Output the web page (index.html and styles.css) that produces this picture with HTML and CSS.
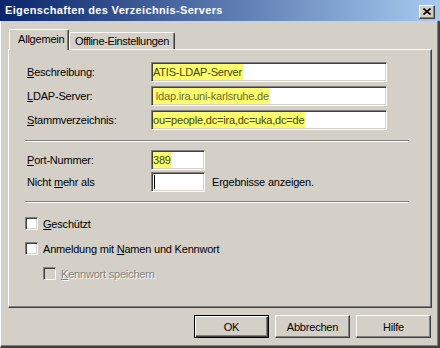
FILE: index.html
```html
<!DOCTYPE html>
<html lang="de">
<head>
    <meta charset="UTF-8">
    <title>Eigenschaften des Verzeichnis-Servers</title>
    <link rel="stylesheet" href="styles.css">
</head>
<body>
    <div class="window">
        <div class="titlebar">
            <span class="title">Eigenschaften des Verzeichnis-Servers</span>
            <span class="close">
                <svg width="8" height="7" viewBox="0 0 8 7"><path d="M0.5 0.5 L7.5 6.5 M7.5 0.5 L0.5 6.5" stroke="#000" stroke-width="1.6" fill="none"/></svg>
            </span>
        </div>

        <div class="frame">
            <div class="tabs">
                <div class="tab active">Allgemein</div>
                <div class="tab">Offline-Einstellungen</div>
            </div>

            <div class="panel">
                <div class="grid">
                    <label><u>B</u>eschreibung:</label>
                    <div class="field wide"><span class="hl">ATIS-LDAP-Server</span></div>
                    <label><u>L</u>DAP-Server:</label>
                    <div class="field wide"><span class="hl light">&nbsp;ldap.ira.uni-karlsruhe.de</span></div>
                    <label><u>S</u>tammverzeichnis:</label>
                    <div class="field wide"><span class="hl">ou=people,dc=ira,dc=uka,dc=de</span></div>
                </div>

                <div class="sep first"></div>

                <div class="grid tight">
                    <label><u>P</u>ort-Nummer:</label>
                    <div class="row"><div class="field short"><span class="hl">389</span></div></div>
                    <label>Nicht <u>m</u>ehr als</label>
                    <div class="row">
                        <div class="field short"><span class="caret"></span></div>
                        <span class="after">Ergebnisse anzeigen.</span>
                    </div>
                </div>

                <div class="sep"></div>

                <div class="checks">
                    <div class="check"><span class="box"></span><span><u>G</u>eschützt</span></div>
                    <div class="check"><span class="box"></span><span>Anmeldung mit <u>N</u>amen und Kennwort</span></div>
                    <div class="check sub disabled"><span class="box"></span><span><u>K</u>ennwort speichern</span></div>
                </div>
            </div>

            <div class="buttons">
                <button class="btn default">OK</button>
                <button class="btn">Abbrechen</button>
                <button class="btn">Hilfe</button>
            </div>
        </div>
    </div>
</body>
</html>
```

FILE: styles.css
```css
body {
    margin: 0;
    background-color: #d4d0c8;
    font-family: "Liberation Sans", Arial, sans-serif;
    font-size: 11px;
    letter-spacing: -0.2px;
    color: #000;
}
.window {
    width: 440px;
    height: 348px;
    display: flex;
    flex-direction: column;
    background-color: #d4d0c8;
}
.titlebar {
    height: 21px;
    flex: none;
    display: flex;
    justify-content: space-between;
    background: linear-gradient(to right, #0a246a, #a6caf0);
}
.title {
    padding-left: 5px;
    line-height: 21px;
    color: white;
    font-weight: bold;
    font-size: 11px;
    letter-spacing: 0.35px;
}
.close {
    width: 16px;
    height: 14px;
    margin: 5px 5px 0 0;
    box-sizing: border-box;
    background-color: #d4d0c8;
    border: 1px solid;
    border-color: #fff #404040 #404040 #fff;
    box-shadow: inset -1px -1px #808080;
    display: flex;
    align-items: center;
    justify-content: center;
}
.close svg {
    display: block;
    margin: 0 1px 1px 0;
}
.frame {
    flex: 1;
    padding: 8px 6px 0 7px;
    border-left: 1px solid #fff;
    border-right: 2px solid #404040;
    border-bottom: 2px solid #404040;
    box-shadow: inset -1px -1px #808080;
}
.tabs {
    display: flex;
    align-items: flex-end;
    height: 20px;
    padding-left: 1px;
}
.tab {
    width: 106px;
    height: 17px;
    line-height: 16px;
    padding: 0 0 0 5px;
    box-sizing: border-box;
    border-top: 1px solid #fff;
    border-left: 1px solid #fff;
    border-right: 1px solid #404040;
    border-radius: 2px 2px 0 0;
    box-shadow: inset -1px 0 #808080;
    letter-spacing: -0.35px;
    white-space: nowrap;
}
.tab.active {
    position: relative;
    z-index: 1;
    width: 60px;
    height: 21px;
    margin-bottom: -1px;
    padding: 0 0 0 8px;
    line-height: 19px;
    background-color: #d4d0c8;
    letter-spacing: -0.2px;
}
.panel {
    width: 424px;
    height: 259px;
    box-sizing: border-box;
    padding: 12px 0 0 16px;
    border: 1px solid;
    border-color: #fff #404040 #404040 #fff;
    box-shadow: inset -1px -1px #808080;
}
.grid {
    display: grid;
    grid-template-columns: 126px 236px;
    grid-auto-rows: 20px;
    row-gap: 4px;
    align-items: center;
}
.grid.tight {
    margin-top: 8px;
    row-gap: 2px;
}
label {
    padding-left: 2px;
}
.field {
    height: 20px;
    box-sizing: border-box;
    background-color: white;
    border: 1px solid;
    border-color: #808080 #fff #fff #808080;
    box-shadow: inset 1px 1px #404040, inset -1px -1px #d4d0c8;
    padding: 1px 2px 1px 1px;
    display: flex;
    align-items: center;
    overflow: hidden;
    white-space: nowrap;
}
.field.short {
    width: 54px;
}
.hl {
    height: 16px;
    line-height: 16px;
    padding-right: 1px;
    background-color: #fcfc6c;
    color: #45450e;
}
.hl.light {
    color: #6e6e32;
}
.caret {
    width: 1px;
    height: 14px;
    margin-left: 1px;
    background-color: #000;
}
.row {
    display: flex;
    align-items: center;
}
.after {
    margin-left: 7px;
}
.sep {
    width: 384px;
    height: 0;
    margin-top: 9px;
    border-top: 1px solid #808080;
    border-bottom: 1px solid #fff;
}
.sep.first {
    margin-top: 10px;
}
.checks {
    display: flex;
    flex-direction: column;
    gap: 12px;
    margin-top: 14px;
}
.check {
    display: flex;
    align-items: center;
    height: 13px;
    gap: 5px;
}
.check.sub {
    margin-left: 18px;
}
.box {
    width: 13px;
    height: 13px;
    box-sizing: border-box;
    background-color: white;
    border: 1px solid;
    border-color: #808080 #fff #fff #808080;
    box-shadow: inset 1px 1px #404040, inset -1px -1px #d4d0c8;
}
.check.disabled .box {
    background-color: #d4d0c8;
}
.check.disabled span {
    color: #808080;
    text-shadow: 1px 1px #fff;
}
.buttons {
    display: flex;
    justify-content: flex-end;
    gap: 6px;
    margin-top: 7px;
    padding-right: 1px;
}
.btn {
    width: 75px;
    height: 23px;
    padding: 0;
    box-sizing: border-box;
    font-family: "Liberation Sans", Arial, sans-serif;
    font-size: 11px;
    letter-spacing: -0.2px;
    color: #000;
    background-color: #d4d0c8;
    border: 1px solid;
    border-color: #fff #404040 #404040 #fff;
    box-shadow: inset -1px -1px #808080;
}
.btn.default {
    border: 1px solid #000;
    box-shadow: inset 1px 1px #fff, inset -1px -1px #404040, inset -2px -2px #808080;
}
```
